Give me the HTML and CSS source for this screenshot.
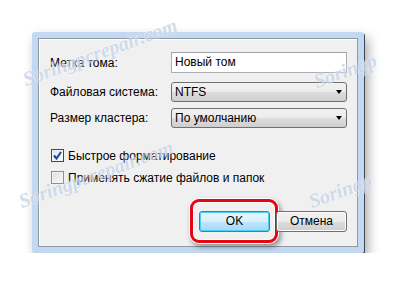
FILE: index.html
```html
<!DOCTYPE html>
<html>
<head>
<meta charset="utf-8">
<title>Форматирование</title>
<link rel="stylesheet" href="styles.css">
</head>
<body>
<div class="window">
  <div class="panel">
    <div class="row">
      <span class="label">Метка тома:</span>
      <span class="textbox">Новый том</span>
    </div>
    <div class="row row-combo">
      <span class="label">Файловая система:</span>
      <span class="combo">NTFS<i class="arrow"></i></span>
    </div>
    <div class="row row-combo2">
      <span class="label">Размер кластера:</span>
      <span class="combo">По умолчанию<i class="arrow"></i></span>
    </div>

    <div class="check check-first">
      <span class="box checked">
        <svg width="9" height="9" viewBox="0 0 9 9"><path d="M1 4.5 L3.5 7.5 L8 1" fill="none" stroke="#1f3f93" stroke-width="2"/></svg>
      </span>
      <span>Быстрое форматирование</span>
    </div>
    <div class="check">
      <span class="box"></span>
      <span>Применять сжатие файлов и папок</span>
    </div>

    <div class="buttons">
      <span class="btn btn-default">OK</span>
      <span class="btn">Отмена</span>
    </div>
  </div>
</div>

<span class="mark mark-a">Soringpcrepair.com</span>
<span class="mark mark-b">Soringpcrepair.com</span>
<span class="mark mark-c">Soringp</span>
<span class="mark mark-d">Soringp</span>
</body>
</html>
```

FILE: styles.css
```css
body {
   margin: 0;
   background-color: white;
   font-family: "Liberation Sans", Arial, sans-serif;
   font-size: 12px;
   color: #000;
   overflow: hidden;
}

.window {
   margin: 32px 0 0 32px;
   width: 320px;
   border: 6px solid #c3d9f1;
   border-radius: 3px;
   box-shadow: 1px 1px 0 #3d4650, 4px 6px 12px rgba(0, 0, 0, 0.35);
}

.panel {
   height: 194px;
   border: 1px solid #8e9aa8;
   background-color: #f0f0f0;
   padding: 13px 10px 0 11px;
   box-shadow: inset 1px 1px 0 #fff;
}

.row {
   display: flex;
   align-items: center;
   height: 21px;
}

.row-combo {
   margin-top: 9px;
   height: 20px;
}

.row-combo2 {
   margin-top: 6px;
   height: 20px;
}

.label {
   width: 121px;
   flex: none;
}

.textbox {
   flex: 1;
   height: 19px;
   line-height: 19px;
   padding-left: 3px;
   background: white;
   border: 1px solid #abadb3;
   border-top-color: #9ea2a8;
}

.combo {
   position: relative;
   flex: 1;
   height: 18px;
   line-height: 18px;
   padding-left: 3px;
   border: 1px solid #707070;
   border-radius: 3px;
   background: linear-gradient(#f2f2f2 0%, #ebebeb 50%, #dddddd 51%, #cfcfcf 100%);
}

.arrow {
   position: absolute;
   right: 4px;
   top: 7px;
   width: 0;
   height: 0;
   border-left: 3.5px solid transparent;
   border-right: 3.5px solid transparent;
   border-top: 4px solid #000;
}

.check {
   display: flex;
   align-items: center;
   gap: 4px;
   margin-top: 9px;
   height: 13px;
   padding-left: 1px;
}

.check-first {
   margin-top: 21px;
}

.box {
   width: 11px;
   height: 11px;
   border: 1px solid #8e8f8f;
   background: linear-gradient(135deg, #dcdcdc, #fbfbfb);
   box-shadow: inset 0 0 0 1px #f4f4f4;
   display: flex;
   align-items: center;
   justify-content: center;
}

.box.checked {
   border-color: #1c5180;
   background: linear-gradient(135deg, #cde4f7, #ffffff);
}

.buttons {
   display: flex;
   justify-content: flex-end;
   gap: 6px;
   margin-top: 27px;
}

.btn {
   position: relative;
   width: 69px;
   height: 19px;
   line-height: 19px;
   text-align: center;
   border: 1px solid #707070;
   border-radius: 3px;
   background: linear-gradient(#f2f2f2 0%, #ebebeb 50%, #dddddd 51%, #cfcfcf 100%);
   box-shadow: inset 0 0 0 1px #fcfcfc;
}

.btn-default {
   border-color: #3c7fb1;
   box-shadow: inset 0 0 0 1px #48d2f8;
   background: linear-gradient(#eaf6fd 0%, #d9f0fc 50%, #bee6fd 51%, #a7d9f5 100%);
}

.btn-default::after {
   content: "";
   position: absolute;
   left: -10px;
   right: -9px;
   top: -13px;
   bottom: -12px;
   border: 3px solid #e30613;
   border-radius: 9px;
   box-shadow: 0 0 0 1px #fff, inset 0 0 0 1px #fff, 2px 3px 5px 1px rgba(0, 0, 0, 0.4);
}

/* watermark */
.mark {
   position: absolute;
   font-family: "Liberation Serif", serif;
   font-style: italic;
   font-weight: bold;
   font-size: 20px;
   line-height: 22px;
   color: rgba(165, 185, 218, 0.5);
   text-shadow: 0 0 2px rgba(255, 255, 255, 0.9);
   transform-origin: left bottom;
   transform: rotate(-20deg);
   white-space: nowrap;
   pointer-events: none;
}

.mark-a {
   left: 27px;
   top: 68px;
}

.mark-b {
   left: 23px;
   top: 190px;
}

.mark-c {
   left: 318px;
   top: 70px;
}

.mark-d {
   left: 313px;
   top: 190px;
}
```
